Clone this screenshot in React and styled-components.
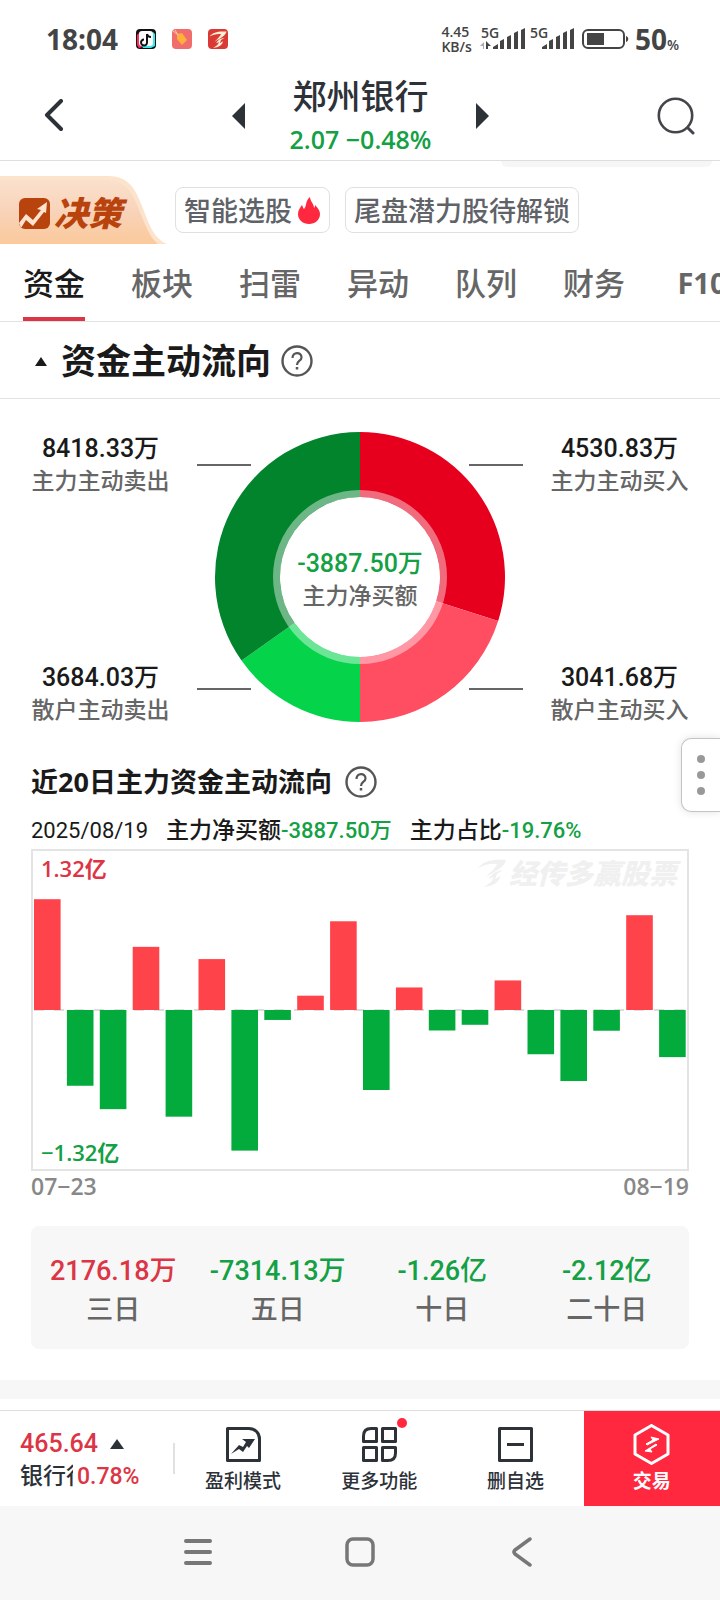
import React from "react";
import styled, { createGlobalStyle } from "styled-components";

const RED = "#dc3545";
const GREEN = "#14a044";
const INK = "#2d3239";
const CJK = `"Noto Sans CJK SC", sans-serif`;
const TEXT_FONT = `"Open Sans", ${CJK}`;
const NUMBER_FONT = `Roboto, ${CJK}`;

const GlobalStyle = createGlobalStyle`
  * {
    box-sizing: border-box;
  }

  body {
    margin: 0;
    background: #fff;
    color: #1a1a1a;
    font-family: ${TEXT_FONT};
    font-weight: 500;
  }

  button {
    margin: 0;
    padding: 0;
    border: 0;
    background: none;
    color: inherit;
    font: inherit;
    cursor: pointer;
  }

  svg {
    display: block;
    flex-shrink: 0;
  }
`;

const Page = styled.div`
  position: relative;
  min-height: 100vh;
  display: flex;
  flex-direction: column;
  overflow: hidden;
`;

/* status bar */

const StatusBar = styled.div`
  display: flex;
  align-items: center;
  justify-content: space-between;
  height: 76px;
  padding: 2px 41px 0 46px;
  color: #444;
  font-weight: 600;
`;

const StatusGroup = styled.div`
  display: flex;
  align-items: center;
  gap: ${(props) => props.$gap}px;
`;

const Clock = styled.time`
  margin-right: 2px;
  font-size: 28px;
  font-weight: 700;
  line-height: 32px;
`;

const Speed = styled.div`
  margin-right: 4px;
  font-size: 14px;
  line-height: 15px;
`;

const BatteryLevel = styled.div`
  display: flex;
  align-items: baseline;
  margin-left: 2px;
  font-size: 28px;
  font-weight: 700;
  line-height: 32px;

  small {
    font-size: 14px;
    font-weight: 600;
    line-height: 16px;
  }
`;

/* header */

const Header = styled.header`
  display: grid;
  grid-template-columns: 1fr auto 1fr;
  align-items: center;
  height: 85px;
  padding: 0 25px 4px 44px;
  border-bottom: 1px solid #dedede;
  color: ${INK};
`;

const IconButton = styled.button`
  display: flex;
  justify-self: ${(props) => props.$side || "center"};
`;

const Switcher = styled.div`
  display: flex;
  align-items: center;
  gap: 45px;
  margin-right: 18px;
`;

const StockTitle = styled.h1`
  margin: 0;
  font-size: 34px;
  font-weight: 500;
  line-height: 40px;
  text-align: center;
`;

const StockQuote = styled.div`
  padding-top: 6px;
  color: ${GREEN};
  font-size: 25px;
  font-weight: 600;
  line-height: 34px;
  text-align: center;
`;

/* promo strip */

const Strip = styled.div`
  display: flex;
  flex-direction: column;
`;

const StripShade = styled.div`
  align-self: flex-end;
  width: 211px;
  height: 6px;
  margin-right: 8px;
  border-radius: 0 0 6px 6px;
  background: #f6f6f6;
`;

const StripRow = styled.div`
  display: flex;
  align-items: center;
  gap: 15px;
  height: 76px;
  padding-top: 10px;
`;

const Decision = styled.a`
  display: grid;
  width: 160px;
  height: 68px;
  align-items: center;
  color: #b8430d;
  text-decoration: none;

  > * {
    grid-area: 1 / 1;
  }
`;

const DecisionLabel = styled.span`
  display: flex;
  align-items: center;
  gap: 4px;
  padding: 6px 0 0 19px;
  font-size: 34px;
  font-style: italic;
  font-weight: 900;
  line-height: 40px;
`;

const Chip = styled.button`
  display: flex;
  align-items: center;
  gap: 6px;
  height: 46px;
  padding: 1px 8px 0;
  border: 1px solid #e0e0e0;
  border-radius: 8px;
  color: #5f6368;
  font-size: 27px;
  line-height: 36px;
  white-space: nowrap;
`;

/* tabs */

const Tabs = styled.nav`
  display: flex;
  gap: 46px;
  height: 79px;
  padding-left: 23px;
  border-bottom: 1px solid #e2e2e2;
  overflow: hidden;
`;

const Tab = styled.button`
  flex-shrink: 0;
  min-width: 62px;
  border-top: 6px solid transparent;
  border-bottom: 4px solid ${(props) => (props.$active ? RED : "transparent")};
  color: ${(props) => (props.$active ? "#1a1a1a" : "#666")};
  font-size: ${(props) => (props.$latin ? 29 : 31)}px;
  font-weight: ${(props) => (props.$latin ? 700 : 500)};
  line-height: 40px;
`;

const SectionHead = styled.div`
  display: flex;
  align-items: center;
  gap: ${(props) => props.$gap}px;
  height: 77px;
  padding: 2px 0 0 35px;
  border-bottom: 1px solid #e2e2e2;
`;

const SectionTitle = styled.h2`
  margin: 0 0 0 4px;
  font-size: 35px;
  font-weight: 700;
  line-height: 44px;
`;

/* donut */

const FlowGrid = styled.section`
  display: grid;
  grid-template-columns: 1fr 326px 1fr;
  height: 328px;
  padding: 33px 4px 0;
`;

const FlowColumn = styled.div`
  display: flex;
  flex-direction: column;
  justify-content: space-between;
`;

const FlowItem = styled.div`
  font-family: ${NUMBER_FONT};
  font-size: 25px;
  line-height: 33px;
  text-align: center;
  color: ${(props) => props.$color || "#1a1a1a"};
`;

const FlowLabel = styled.div`
  color: #666;
  font-size: 23px;
`;

const DonutBox = styled.div`
  display: grid;
  align-items: center;

  > * {
    grid-area: 1 / 1;
  }

  > svg {
    align-self: start;
  }
`;

/* 20 day chart */

const History = styled.section`
  padding: 35px 31px 31px;
`;

const HistoryHead = styled.div`
  display: flex;
  align-items: center;
  gap: 13px;
`;

const HistoryTitle = styled.h3`
  margin: 0;
  font-size: 27px;
  font-weight: 700;
  line-height: 40px;
`;

const Summary = styled.div`
  display: flex;
  gap: 18px;
  padding: 13px 0 2px;
  font-family: ${NUMBER_FONT};
  font-size: 23px;
  line-height: 32px;
  white-space: nowrap;
`;

const Figure = styled.span`
  font-size: 22px;
  font-weight: ${(props) => (props.$color ? 500 : 400)};
  color: ${(props) => props.$color || "inherit"};
`;

const ChartBox = styled.div`
  position: relative;
  padding: 0 1px;
  border: 2px solid #e4e4e4;
`;

const Limit = styled.div`
  position: absolute;
  left: 8px;
  ${(props) => (props.$low ? "bottom: 1px" : "top: 1px")};
  color: ${(props) => (props.$low ? GREEN : RED)};
  font-size: 22px;
  font-weight: 600;
  line-height: 32px;
`;

const Watermark = styled.div`
  position: absolute;
  top: 4px;
  right: 10px;
  display: flex;
  align-items: center;
  gap: 3px;
  color: #f0f0f0;
  font-size: 28px;
  font-style: italic;
  font-weight: 900;
  line-height: 36px;
`;

const Dates = styled.div`
  display: flex;
  justify-content: space-between;
  color: #888;
  font-size: 23px;
  font-weight: 600;
  line-height: 30px;
`;

const Periods = styled.div`
  display: grid;
  grid-template-columns: repeat(4, 1fr);
  margin-top: 25px;
  padding: 25px 0 22px;
  border-radius: 8px;
  background: #f7f7f7;
  text-align: center;
`;

const PeriodValue = styled.div`
  color: ${(props) => props.$color};
  font-family: ${NUMBER_FONT};
  font-size: 27px;
  line-height: 40px;
`;

const PeriodName = styled.div`
  color: #666;
  font-size: 27px;
  line-height: 36px;
`;

const Divider = styled.div`
  height: 19px;
  margin-bottom: 11px;
  background: #f7f7f7;
`;

const SideHandle = styled.button`
  position: absolute;
  top: 738px;
  right: 0;
  display: flex;
  flex-direction: column;
  align-items: center;
  justify-content: center;
  gap: 8px;
  width: 39px;
  height: 74px;
  border: 1px solid #c4c4c4;
  border-right: 0;
  border-radius: 10px 0 0 10px;
  background: #fff;
  box-shadow: 0 0 8px rgba(0, 0, 0, 0.12);

  i {
    width: 8px;
    height: 8px;
    border-radius: 50%;
    background: #999;
  }
`;

/* bottom bars */

const ActionBar = styled.footer`
  display: flex;
  height: 96px;
  border-top: 1px solid #dedede;
  color: ${INK};
`;

const IndexBox = styled.div`
  position: relative;
  display: flex;
  flex-direction: column;
  justify-content: center;
  width: 175px;
  padding: 4px 0 0 20px;
  font-family: ${NUMBER_FONT};

  &::after {
    content: "";
    position: absolute;
    top: 32px;
    right: 0;
    width: 2px;
    height: 31px;
    background: #e0e0e0;
  }
`;

const IndexRow = styled.div`
  display: flex;
  align-items: center;
  gap: ${(props) => props.$gap}px;
  height: 33px;
`;

const IndexValue = styled.span`
  color: ${RED};
  font-size: ${(props) => props.$size}px;
  line-height: 30px;
`;

const IndexName = styled.span`
  width: 53px;
  overflow: hidden;
  font-size: 23px;
  line-height: 34px;
  white-space: nowrap;
`;

const Action = styled.button`
  display: flex;
  flex: 1;
  flex-direction: column;
  align-items: center;
  padding-top: ${(props) => (props.$primary ? 13 : 16)}px;
  background: ${(props) => (props.$primary ? "#ff283e" : "none")};
  color: ${(props) => (props.$primary ? "#fff" : INK)};
  font-size: 19px;
  font-weight: ${(props) => (props.$primary ? 700 : 500)};
  line-height: 30px;
`;

const ActionIcon = styled.span`
  position: relative;
  margin-bottom: ${(props) => (props.$primary ? 1 : 4)}px;
`;

const Dot = styled.i`
  position: absolute;
  top: -9px;
  right: -10px;
  width: 10px;
  height: 10px;
  border-radius: 50%;
  background: #ff283e;
`;

const SystemBar = styled.div`
  display: flex;
  flex: 1;
  align-items: center;
  justify-content: center;
  gap: 132px;
  min-height: 94px;
  padding-bottom: 2px;
  background: #f7f7f7;
  color: #777;
`;

const TABS = ["资金", "板块", "扫雷", "异动", "队列", "财务", "F10"];

const FLOWS = {
  mainSell: 8418.33,
  retailSell: 3684.03,
  mainBuy: 4530.83,
  retailBuy: 3041.68,
};

// net main-force inflow per trading day, in 万
const DAYS = [
  9140, -6250, -8180, 5210, -8800, 4200, -11600, -820, 1180, 7320, -6600, 1860,
  -1690, -1220, 2440, -3650, -5860, -1710, 7820, -3887,
];
const LIMIT = 13200;

const PERIODS = [
  { name: "三日", value: "2176.18万", color: RED },
  { name: "五日", value: "-7314.13万", color: GREEN },
  { name: "十日", value: "-1.26亿", color: GREEN },
  { name: "二十日", value: "-2.12亿", color: GREEN },
];

const SWOOSH =
  "M0 9C6 2 14 0 28 1C27 7 20 11 8 18C14 12 18 8 19 5C12 4 6 6 0 9ZM25 11C18 12 13 15 11 20L16 18L13 23L6 28C15 27 22 23 22 17L17 20L19 15Z";

function Signal({ busy }) {
  return (
    <svg width="45" height="28" viewBox="0 -2 45 28" fill="#444">
      <text x="1" y="11" fontSize="14" fontWeight="600">
        5G
      </text>
      <path d="M13 22V20L18 17V22ZM20 22V14L24 12V22ZM27 22V10L31 8V22ZM34 22V6L38 4V22ZM41 22V3L45 1V22Z" />
      {busy && (
        <>
          <path d="M0 19L4 15V22H3V19Z" fill="#aaa" />
          <path d="M6 22V14L11 19H8V22Z" />
        </>
      )}
    </svg>
  );
}

function Help() {
  return (
    <svg width="32" height="32" viewBox="0 0 32 32" fill="none" stroke="#555">
      <circle cx="16" cy="16" r="14.5" strokeWidth="2.4" />
      <path
        d="M11.5 13C11.5 6.5 20.5 6.5 20.5 12.5C20.5 16 16 15.5 16 20"
        strokeWidth="2.2"
      />
      <path d="M16 22V24.5" strokeWidth="2.5" />
    </svg>
  );
}

function Triangle({ width, height, points }) {
  return (
    <svg width={width} height={height} viewBox={`0 0 ${width} ${height}`}>
      <polygon points={points} fill="currentColor" />
    </svg>
  );
}

function arc(from, to) {
  const [cx, cy, outer, inner] = [163, 145, 145, 80];
  const point = (deg, r) => {
    const a = (deg * Math.PI) / 180;
    return `${cx + r * Math.sin(a)} ${cy - r * Math.cos(a)}`;
  };
  return `M${point(from, outer)}A${outer} ${outer} 0 0 1 ${point(to, outer)}L${point(to, inner)}A${inner} ${inner} 0 0 0 ${point(from, inner)}Z`;
}

function Donut() {
  const { mainBuy, retailBuy, mainSell, retailSell } = FLOWS;
  const buyEnd = (mainBuy / (mainBuy + retailBuy)) * 180;
  const sellStart = 360 - (mainSell / (mainSell + retailSell)) * 180;

  return (
    <svg width="326" height="290" viewBox="0 0 326 290">
      <path d={arc(0, buyEnd)} fill="#e6001e" />
      <path d={arc(buyEnd, 180)} fill="#ff4d62" />
      <path d={arc(180, sellStart)} fill="#05d34a" />
      <path d={arc(sellStart, 360)} fill="#02842d" />
      <circle
        cx="163"
        cy="145"
        r="83.5"
        fill="none"
        stroke="#fff"
        strokeOpacity="0.42"
        strokeWidth="7"
      />
      <path
        d="M0 33H54M272 33H326M0 257H54M272 257H326"
        stroke="#666"
        strokeWidth="2"
      />
    </svg>
  );
}

function Flow({ value, label }) {
  return (
    <FlowItem>
      {value.toFixed(2)}万<FlowLabel>{label}</FlowLabel>
    </FlowItem>
  );
}

function BarChart() {
  const mid = 159;
  return (
    <svg
      width="100%"
      height="318"
      viewBox="0 0 652 318"
      preserveAspectRatio="none"
    >
      <path d="M0 159H652" stroke="#bbb" strokeDasharray="10 10" />
      {DAYS.map((value, i) => {
        const h = (Math.abs(value) / LIMIT) * 160;
        return (
          <rect
            key={i}
            x={i * 32.9}
            y={value > 0 ? mid - h : mid}
            width="26.6"
            height={h}
            fill={value > 0 ? "#ff434a" : "#02ab3b"}
          />
        );
      })}
    </svg>
  );
}

function Status() {
  return (
    <StatusBar>
      <StatusGroup $gap={16}>
        <Clock>18:04</Clock>
        <svg width="20" height="20" viewBox="0 0 20 20">
          <rect width="20" height="20" rx="4" fill="#111" />
          <path d="M1 6L4 3L6 18L3 19L1 16Z" fill="#ff2b5e" />
          <path d="M17 3L19 5V17L15 19L7 19L6 17Z" fill="#3be8ec" />
          <rect x="3" y="2" width="14" height="15" rx="3" fill="#fff" />
          <path
            d="M11 5V13A3 3 0 1 1 8 10.5M11 5C11.5 7.5 13 8 15 8"
            fill="none"
            stroke="#111"
            strokeWidth="2"
          />
        </svg>
        <svg width="20" height="20" viewBox="0 0 20 20">
          <rect width="20" height="20" rx="4" fill="#f16d6d" />
          <path d="M5 5L10 4L15 11L10 16L5 10Z" fill="#ffb03a" />
          <path d="M1 2L6 6M3 1L6 6" stroke="#ffc9a0" />
        </svg>
        <svg width="20" height="20" viewBox="0 0 20 20">
          <rect width="20" height="20" rx="4" fill="#d93a35" />
          <svg x="1" y="2" width="18" height="17" viewBox="0 0 28 28">
            <path d={SWOOSH} fill="#fdf0d2" />
          </svg>
        </svg>
      </StatusGroup>
      <StatusGroup $gap={4}>
        <Speed>
          4.45
          <br />
          KB/s
        </Speed>
        <Signal busy />
        <Signal />
        <svg width="51" height="22" viewBox="1 0 51 22">
          <rect
            x="6"
            y="2"
            width="41"
            height="18"
            rx="5"
            fill="none"
            stroke="#444"
            strokeWidth="2"
          />
          <rect x="10" y="5" width="17" height="12" fill="#444" />
          <path d="M49 8C52 9 52 13 49 14Z" fill="#444" />
        </svg>
        <BatteryLevel>
          50<small>%</small>
        </BatteryLevel>
      </StatusGroup>
    </StatusBar>
  );
}

function App() {
  return (
    <Page>
      <GlobalStyle />
      <Status />

      <Header>
        <IconButton $side="start" aria-label="返回">
          <svg
            width="20"
            height="34"
            viewBox="0 0 20 34"
            fill="none"
            stroke={INK}
            strokeWidth="4"
            strokeLinecap="round"
            strokeLinejoin="round"
          >
            <path d="M17 2L3 16L17 30" />
          </svg>
        </IconButton>
        <Switcher>
          <IconButton aria-label="上一只">
            <Triangle width={13} height={26} points="13,0 13,26 0,13" />
          </IconButton>
          <div>
            <StockTitle>郑州银行</StockTitle>
            <StockQuote>2.07 −0.48%</StockQuote>
          </div>
          <IconButton aria-label="下一只">
            <Triangle width={13} height={26} points="0,0 0,26 13,13" />
          </IconButton>
        </Switcher>
        <IconButton $side="end" aria-label="搜索">
          <svg
            width="38"
            height="38"
            viewBox="0 0 38 38"
            fill="none"
            stroke="#46434a"
            strokeLinecap="round"
          >
            <circle cx="18.5" cy="18.5" r="16.7" strokeWidth="2.6" />
            <path d="M31 31L36 36" strokeWidth="3" />
          </svg>
        </IconButton>
      </Header>

      <Strip>
        <StripShade />
        <StripRow>
          <Decision href="#decision">
            <svg width="168" height="68" viewBox="0 0 168 68">
              <defs>
                <linearGradient id="plate" x1="0" y1="0" x2="0" y2="1">
                  <stop offset="0" stopColor="#fbe0cd" />
                  <stop offset="0.5" stopColor="#f8d3b9" />
                  <stop offset="1" stopColor="#fbc99b" />
                </linearGradient>
              </defs>
              <path
                d="M0 0H108C128 0 135 12 142 30C149 48 153 62 167 68H0Z"
                fill="#fce3cb"
              />
              <path
                d="M0 4H106C124 4 131 14 138 31C145 48 149 61 158 68H0Z"
                fill="url(#plate)"
              />
            </svg>
            <DecisionLabel>
              <svg width="31" height="31" viewBox="0 0 31 31">
                <rect width="31" height="31" rx="6" fill="#b8430d" />
                <path
                  d="M0 25L7 16L14 22L22 12L18 11L28 4L27 15L25 14L14 28L7 22L2 30Z"
                  fill="#fde3d0"
                />
              </svg>
              决策
            </DecisionLabel>
          </Decision>
          <Chip>
            智能选股
            <svg width="23" height="27" viewBox="0 0 23 27" fill="#ff283e">
              <path d="M12 0C12 4 16 7 16 11C17 10 17 9 17 8C20 11 22 14 22 17C22 23 17 27 11 27C5 27 0 23 0 17C0 13 2 11 4 8C5 10 5 11 6 12C9 9 7 4 12 0Z" />
            </svg>
          </Chip>
          <Chip>尾盘潜力股待解锁</Chip>
        </StripRow>
      </Strip>

      <Tabs>
        {TABS.map((tab, i) => (
          <Tab key={tab} $active={i === 0} $latin={tab === "F10"}>
            {tab}
          </Tab>
        ))}
      </Tabs>

      <SectionHead $gap={10}>
        <Triangle width={12} height={9} points="6,0 12,9 0,9" />
        <SectionTitle>资金主动流向</SectionTitle>
        <IconButton aria-label="资金主动流向说明">
          <Help />
        </IconButton>
      </SectionHead>

      <FlowGrid>
        <FlowColumn>
          <Flow value={FLOWS.mainSell} label="主力主动卖出" />
          <Flow value={FLOWS.retailSell} label="散户主动卖出" />
        </FlowColumn>
        <DonutBox>
          <Donut />
          <FlowItem $color={GREEN}>
            -3887.50万<FlowLabel>主力净买额</FlowLabel>
          </FlowItem>
        </DonutBox>
        <FlowColumn>
          <Flow value={FLOWS.mainBuy} label="主力主动买入" />
          <Flow value={FLOWS.retailBuy} label="散户主动买入" />
        </FlowColumn>
      </FlowGrid>

      <History>
        <HistoryHead>
          <HistoryTitle>近20日主力资金主动流向</HistoryTitle>
          <IconButton aria-label="近20日流向说明">
            <Help />
          </IconButton>
        </HistoryHead>
        <Summary>
          <Figure>2025/08/19</Figure>
          <span>
            主力净买额<Figure $color={GREEN}>-3887.50万</Figure>
          </span>
          <span>
            主力占比<Figure $color={GREEN}>-19.76%</Figure>
          </span>
        </Summary>
        <ChartBox>
          <Watermark>
            <svg width="28" height="28" viewBox="0 0 28 28" fill="currentColor">
              <path d={SWOOSH} />
            </svg>
            经传多赢股票
          </Watermark>
          <BarChart />
          <Limit>1.32亿</Limit>
          <Limit $low>−1.32亿</Limit>
        </ChartBox>
        <Dates>
          <span>07−23</span>
          <span>08−19</span>
        </Dates>
        <Periods>
          {PERIODS.map((period) => (
            <div key={period.name}>
              <PeriodValue $color={period.color}>{period.value}</PeriodValue>
              <PeriodName>{period.name}</PeriodName>
            </div>
          ))}
        </Periods>
      </History>
      <Divider />

      <ActionBar>
        <IndexBox>
          <IndexRow $gap={12}>
            <IndexValue $size={25}>465.64</IndexValue>
            <Triangle width={14} height={10} points="7,0 14,10 0,10" />
          </IndexRow>
          <IndexRow $gap={4}>
            <IndexName>银行行</IndexName>
            <IndexValue $size={23}>0.78%</IndexValue>
          </IndexRow>
        </IndexBox>
        <Action>
          <ActionIcon>
            <svg width="35" height="35" viewBox="0 0 35 35" fill="none">
              <path
                d="M1.5 1.5H23C29 1.5 33.5 6 33.5 12V33.5H1.5Z"
                stroke={INK}
                strokeWidth="3"
                strokeLinejoin="round"
              />
              <path
                d="M5 27L13 18L17 20L20 15L16 12L29 12L23 21L21 19L17 25L13 22Z"
                fill={INK}
              />
            </svg>
          </ActionIcon>
          盈利模式
        </Action>
        <Action>
          <ActionIcon>
            <svg
              width="35"
              height="35"
              viewBox="0 0 35 35"
              fill="none"
              stroke={INK}
              strokeWidth="3"
              strokeLinejoin="round"
            >
              <path d="M9 1.5H14.5V14.5H1.5V9C1.5 4 4 1.5 9 1.5Z" />
              <path d="M20.5 1.5H33.5V14.5H20.5Z" />
              <path d="M1.5 20.5H14.5V33.5H1.5Z" />
              <path d="M20.5 20.5H33.5V26C33.5 31 31 33.5 26 33.5H20.5Z" />
            </svg>
            <Dot />
          </ActionIcon>
          更多功能
        </Action>
        <Action>
          <ActionIcon>
            <svg
              width="35"
              height="35"
              viewBox="0 0 35 35"
              fill="none"
              stroke={INK}
              strokeWidth="3"
              strokeLinejoin="round"
            >
              <path d="M1.5 1.5H33.5V33.5H1.5ZM9 17.5H26" />
            </svg>
          </ActionIcon>
          删自选
        </Action>
        <Action $primary>
          <ActionIcon $primary>
            <svg width="37" height="41" viewBox="0 0 37 41" fill="none">
              <path
                d="M18.5 1.5L35 11V30L18.5 39.5L2 30V11Z"
                stroke="#fff"
                strokeWidth="3"
                strokeLinejoin="round"
              />
              <path
                d="M13 20L20 16L18 13L26 15L14 21ZM24 21L17 25L19 28L12 27L23 20Z"
                fill="#fff"
                stroke="#fff"
              />
            </svg>
          </ActionIcon>
          交易
        </Action>
      </ActionBar>

      <SystemBar>
        <IconButton aria-label="最近任务">
          <svg
            width="30"
            height="30"
            viewBox="0 0 30 30"
            stroke="currentColor"
            strokeWidth="4"
            strokeLinecap="round"
          >
            <path d="M3 4H27M3 15H27M3 26H27" />
          </svg>
        </IconButton>
        <IconButton aria-label="主屏幕">
          <svg width="30" height="30" viewBox="0 0 30 30" fill="none">
            <rect
              x="2"
              y="2"
              width="26"
              height="26"
              rx="6"
              stroke="currentColor"
              strokeWidth="3.5"
            />
          </svg>
        </IconButton>
        <IconButton aria-label="后退">
          <svg
            width="30"
            height="30"
            viewBox="0 0 30 30"
            fill="none"
            stroke="currentColor"
            strokeWidth="3.5"
            strokeLinecap="round"
            strokeLinejoin="round"
          >
            <path d="M23 2L8 13Q6 15 8 17L23 28" />
          </svg>
        </IconButton>
      </SystemBar>

      <SideHandle aria-label="更多">
        <i />
        <i />
        <i />
      </SideHandle>
    </Page>
  );
}

export default App;
